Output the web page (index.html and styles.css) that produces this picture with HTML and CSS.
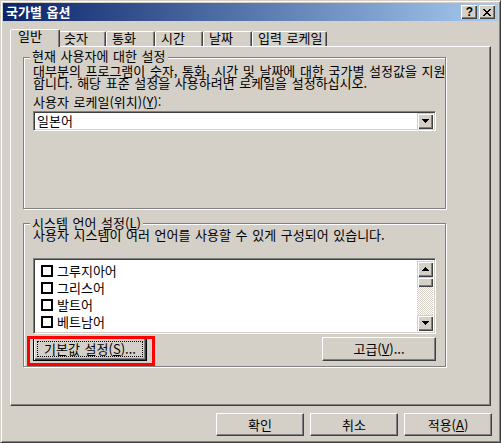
FILE: index.html
```html
<!DOCTYPE html>
<html lang="ko">
<head>
<meta charset="utf-8">
<title>국가별 옵션</title>
<link rel="stylesheet" href="styles.css">
</head>
<body>
<div class="window">
  <div class="titlebar">
    <span class="title">국가별 옵션</span>
    <div class="title-buttons">
      <span class="cap-btn help">?</span>
      <span class="cap-btn close"><svg width="8" height="7" viewBox="0 0 8 7" shape-rendering="crispEdges"><path d="M0 0h2v1H0zM6 0h2v1H6zM1 1h2v1H1zM5 1h2v1H5zM2 2h4v1H2zM3 3h2v1H3zM2 4h4v1H2zM1 5h2v1H1zM5 5h2v1H5zM0 6h2v1H0zM6 6h2v1H6z"/></svg></span>
    </div>
  </div>

  <div class="tabs">
    <div class="tab tab-general selected">일반</div>
    <div class="tab tab-number">숫자</div>
    <div class="tab tab-currency">통화</div>
    <div class="tab tab-time">시간</div>
    <div class="tab tab-date">날짜</div>
    <div class="tab tab-locale">입력 로케일</div>
  </div>

  <div class="panel">
    <div class="group group-user">
      <div class="legend">현재 사용자에 대한 설정</div>
      <p class="desc">대부분의 프로그램이 숫자, 통화, 시간 및 날짜에 대한 국가별 설정값을 지원<br>합니다. 해당 표준 설정을 사용하려면 로케일을 설정하십시오.</p>
      <div class="label">사용자 로케일(위치)(<u>Y</u>):</div>
      <div class="combo">
        <span class="combo-text">일본어</span>
        <span class="raised drop-btn"><svg width="7" height="4" viewBox="0 0 7 4" shape-rendering="crispEdges"><path d="M0 0h7v1H6v1H5v1H4v1H3V3H2V2H1V1H0z"/></svg></span>
      </div>
    </div>

    <div class="group group-system">
      <div class="legend">시스템 언어 설정(<u>L</u>)</div>
      <p class="desc">사용자 시스템이 여러 언어를 사용할 수 있게 구성되어 있습니다.</p>
      <div class="listbox">
        <ul class="items">
          <li><span class="check"></span>그루지아어</li>
          <li><span class="check"></span>그리스어</li>
          <li><span class="check"></span>발트어</li>
          <li><span class="check"></span>베트남어</li>
          <li><span class="check"></span>서유럽 및 미국</li>
        </ul>
        <div class="vscroll">
          <span class="raised sb-btn"><svg width="7" height="4" viewBox="0 0 7 4" shape-rendering="crispEdges"><path d="M3 0h1v1h1v1h1v1h1v1H0V3h1V2h1V1h1z"/></svg></span>
          <span class="raised sb-thumb"></span>
          <span class="sb-track"></span>
          <span class="raised sb-btn"><svg width="7" height="4" viewBox="0 0 7 4" shape-rendering="crispEdges"><path d="M0 0h7v1H6v1H5v1H4v1H3V3H2V2H1V1H0z"/></svg></span>
        </div>
      </div>
      <div class="group-buttons">
        <div class="highlight">
          <button class="btn wide default"><span class="focus">기본값 설정(<u>S</u>)...</span></button>
          <span class="mark"></span>
        </div>
        <button class="btn wide">고급(<u>V</u>)...</button>
      </div>
    </div>
  </div>

  <div class="dialog-buttons">
    <button class="btn">확인</button>
    <button class="btn">취소</button>
    <button class="btn">적용(<u>A</u>)</button>
  </div>
</div>
</body>
</html>
```

FILE: styles.css
```css
* { box-sizing: border-box; }

html, body {
  margin: 0;
  padding: 0;
  background: #D4D0C8;
}

body {
  font-family: "Noto Sans CJK KR", "Noto Sans", sans-serif;
  font-size: 13px;
  line-height: 12px;
  color: #000;
  word-spacing: 1px;
}

u { text-underline-offset: 1px; }

.window {
  width: 501px;
  height: 443px;
  border: 1px solid;
  border-color: #D4D0C8 #404040 #404040 #D4D0C8;
  box-shadow: inset 1px 1px #fff, inset -1px -1px #808080;
  padding: 2px;
  display: flex;
  flex-direction: column;
}

/* title bar */
.titlebar {
  height: 18px;
  flex: none;
  background: linear-gradient(to right, #0A246A, #A6CAF0);
  display: flex;
  align-items: center;
  justify-content: space-between;
  padding: 0 3px;
}

.title {
  color: #fff;
  font-weight: bold;
  line-height: 12px;
}

.title-buttons {
  display: flex;
  gap: 2px;
}

.cap-btn {
  width: 16px;
  height: 14px;
  background: #D4D0C8;
  box-shadow: inset 1px 1px #fff, inset -1px -1px #404040, inset -2px -2px #808080;
  display: flex;
  align-items: center;
  justify-content: center;
}

.cap-btn.help {
  font-family: "Liberation Sans", Arial, sans-serif;
  font-weight: bold;
  font-size: 12px;
  line-height: 12px;
  padding-left: 1px;
}

/* tabs */
.tabs {
  display: flex;
  align-items: flex-end;
  height: 17px;
  margin-top: 8px;
  padding-left: 9px;
  flex: none;
}

.tab {
  height: 15px;
  border: 1px solid;
  border-bottom: 0;
  border-color: #fff #404040 transparent #fff;
  border-radius: 2px 2px 0 0;
  box-shadow: inset -1px 0 #808080;
  background: #D4D0C8;
  padding-left: 5px;
  line-height: 12px;
  white-space: nowrap;
}

.tab-general { width: 46px; }
.tab-number { width: 48px; }
.tab-currency { width: 49px; }
.tab-time { width: 48px; }
.tab-date { width: 49px; }
.tab-locale { width: 75px; }

.tab.selected {
  width: 50px;
  height: 18px;
  margin: 0 -2px -1px -2px;
  padding-left: 7px;
  position: relative;
  z-index: 1;
}

/* panel */
.panel {
  height: 360px;
  flex: none;
  margin: 0 7px;
  border: 1px solid;
  border-color: #fff #404040 #404040 #fff;
  box-shadow: inset -1px -1px #808080;
  padding: 10px 0 0 12px;
}

.group {
  width: 423px;
  border: 1px solid #808080;
  box-shadow: inset 1px 1px #fff, 1px 1px #fff;
  padding: 0 9px;
}

.group-user { height: 152px; }
.group-system { height: 144px; margin-top: 14px; }

.legend {
  display: table;
  height: 12px;
  padding: 0 2px;
  background: #D4D0C8;
  white-space: nowrap;
}

.group-user .legend { margin: -8px 0 0 -3px; }
.group-system .legend { margin: -7px 0 0 -3px; }

.desc {
  margin: 3px 0 0;
  white-space: nowrap;
}

.group-system .desc { margin-top: 0; }

.label {
  margin-top: 7px;
  white-space: nowrap;
}

/* sunken controls */
.combo,
.listbox {
  width: 403px;
  border: 1px solid;
  border-color: #808080 #fff #fff #808080;
  box-shadow: inset 1px 1px #404040, inset -1px -1px #D4D0C8;
  padding: 2px;
  background: #fff;
  display: flex;
}

.combo {
  margin-top: 3px;
  height: 20px;
  align-items: center;
}

.combo-text {
  flex: 1;
  padding-left: 1px;
}

.raised {
  background: #D4D0C8;
  box-shadow: inset 1px 1px #D4D0C8, inset 2px 2px #fff, inset -1px -1px #404040, inset -2px -2px #808080;
  display: flex;
  align-items: center;
  justify-content: center;
}

.drop-btn {
  width: 16px;
  height: 16px;
  flex: none;
}

.listbox {
  height: 76px;
  margin-top: 17px;
}

.items {
  flex: 1;
  list-style: none;
  margin: 0;
  padding: 1px 0 0 5px;
  overflow: hidden;
}

.items li {
  height: 17px;
  display: flex;
  align-items: center;
  white-space: nowrap;
}

.check {
  width: 12px;
  height: 12px;
  border: 2px solid #000;
  background: #fff;
  margin-right: 4px;
  flex: none;
}

.vscroll {
  width: 16px;
  flex: none;
  display: flex;
  flex-direction: column;
}

.sb-btn { height: 16px; flex: none; }
.sb-thumb { height: 10px; flex: none; }

.sb-track {
  flex: 1;
  background-image: repeating-conic-gradient(#fff 0 25%, #D4D0C8 0 50%);
  background-size: 2px 2px;
}

/* buttons */
.group-buttons {
  display: flex;
  justify-content: space-between;
  margin-top: 3px;
}

.btn {
  appearance: none;
  font: inherit;
  word-spacing: inherit;
  color: #000;
  background: #D4D0C8;
  margin: 0;
  padding: 0;
  border: 1px solid;
  border-color: #fff #404040 #404040 #fff;
  box-shadow: inset -1px -1px #808080;
  display: flex;
  align-items: center;
  justify-content: center;
  white-space: nowrap;
}

.btn.wide {
  width: 114px;
  height: 24px;
}

.btn.default {
  border-color: #000;
  box-shadow: inset 1px 1px #fff, inset -1px -1px #404040, inset -2px -2px #808080;
  padding: 3px;
  align-items: stretch;
}

.focus {
  flex: 1;
  border: 1px dotted #000;
  display: flex;
  align-items: center;
  justify-content: center;
}

.highlight {
  position: relative;
  display: flex;
}

.mark {
  position: absolute;
  left: -6px;
  top: -1px;
  right: -8px;
  bottom: -5px;
  border: 3px solid #f00;
  pointer-events: none;
}

.dialog-buttons {
  display: flex;
  justify-content: flex-end;
  gap: 6px;
  margin-top: 7px;
  padding-right: 6px;
  flex: none;
}

.dialog-buttons .btn {
  width: 88px;
  height: 23px;
}
```
